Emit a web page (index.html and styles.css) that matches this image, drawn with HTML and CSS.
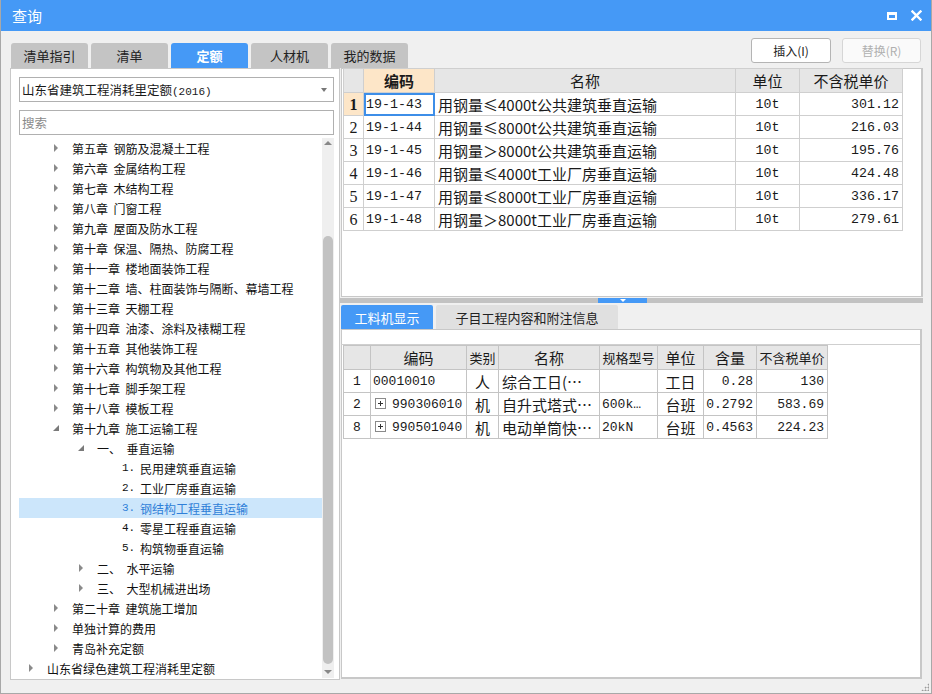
FILE: index.html
```html
<!DOCTYPE html>
<html lang="zh">
<head>
<meta charset="utf-8">
<title>查询</title>
<link rel="stylesheet" href="styles.css">
</head>
<body>
<div class="window">
  <div class="titlebar">
    <span class="title">查询</span>
    <span class="tb-icons">
      <span class="ico-max"></span>
      <svg class="ico-close" width="11" height="11" viewBox="0 0 11 11"><path d="M1.5 1.5 L9.5 9.5 M9.5 1.5 L1.5 9.5" stroke="#fff" stroke-width="2.4" stroke-linecap="square"/></svg>
    </span>
  </div>
  <div class="toolbar">
    <div class="tabs">
      <div class="tab">清单指引</div>
      <div class="tab">清单</div>
      <div class="tab active">定额</div>
      <div class="tab">人材机</div>
      <div class="tab">我的数据</div>
    </div>
    <div class="buttons">
      <div class="btn">插入(I)</div>
      <div class="btn disabled">替换(R)</div>
    </div>
  </div>
  <div class="main">
    <div class="left">
      <div class="select"><span>山东省建筑工程消耗里定额<span class="paren">(2016)</span></span><span class="caret"></span></div>
      <div class="search">搜索</div>
      <div class="treewrap">
        <div class="tree">
          <div class="row l1"><span class="arw r"></span><span class="lbl">第五章  钢筋及混凝土工程</span></div>
          <div class="row l1"><span class="arw r"></span><span class="lbl">第六章  金属结构工程</span></div>
          <div class="row l1"><span class="arw r"></span><span class="lbl">第七章  木结构工程</span></div>
          <div class="row l1"><span class="arw r"></span><span class="lbl">第八章  门窗工程</span></div>
          <div class="row l1"><span class="arw r"></span><span class="lbl">第九章  屋面及防水工程</span></div>
          <div class="row l1"><span class="arw r"></span><span class="lbl">第十章  保温、隔热、防腐工程</span></div>
          <div class="row l1"><span class="arw r"></span><span class="lbl">第十一章  楼地面装饰工程</span></div>
          <div class="row l1"><span class="arw r"></span><span class="lbl">第十二章  墙、柱面装饰与隔断、幕墙工程</span></div>
          <div class="row l1"><span class="arw r"></span><span class="lbl">第十三章  天棚工程</span></div>
          <div class="row l1"><span class="arw r"></span><span class="lbl">第十四章  油漆、涂料及裱糊工程</span></div>
          <div class="row l1"><span class="arw r"></span><span class="lbl">第十五章  其他装饰工程</span></div>
          <div class="row l1"><span class="arw r"></span><span class="lbl">第十六章  构筑物及其他工程</span></div>
          <div class="row l1"><span class="arw r"></span><span class="lbl">第十七章  脚手架工程</span></div>
          <div class="row l1"><span class="arw r"></span><span class="lbl">第十八章  模板工程</span></div>
          <div class="row l1"><span class="arw d"></span><span class="lbl">第十九章  施工运输工程</span></div>
          <div class="row l2"><span class="arw d"></span><span class="lbl">一、  垂直运输</span></div>
          <div class="row l3"><span class="arw"></span><span class="num">1.</span><span class="lbl">民用建筑垂直运输</span></div>
          <div class="row l3"><span class="arw"></span><span class="num">2.</span><span class="lbl">工业厂房垂直运输</span></div>
          <div class="row l3 sel"><span class="arw"></span><span class="num">3.</span><span class="lbl">钢结构工程垂直运输</span></div>
          <div class="row l3"><span class="arw"></span><span class="num">4.</span><span class="lbl">零星工程垂直运输</span></div>
          <div class="row l3"><span class="arw"></span><span class="num">5.</span><span class="lbl">构筑物垂直运输</span></div>
          <div class="row l2"><span class="arw r"></span><span class="lbl">二、  水平运输</span></div>
          <div class="row l2"><span class="arw r"></span><span class="lbl">三、  大型机械进出场</span></div>
          <div class="row l1"><span class="arw r"></span><span class="lbl">第二十章  建筑施工增加</span></div>
          <div class="row l1"><span class="arw r"></span><span class="lbl">单独计算的费用</span></div>
          <div class="row l1"><span class="arw r"></span><span class="lbl">青岛补充定额</span></div>
          <div class="row l0"><span class="arw r"></span><span class="lbl">山东省绿色建筑工程消耗里定额</span></div>
        </div>
        <div class="vscroll">
          <span class="sc-up"></span>
          <div class="sc-track"><div class="sc-thumb"></div></div>
          <span class="sc-down"></span>
        </div>
      </div>
    </div>
    <div class="right">
      <div class="upper">
        <table class="grid top">
          <colgroup><col style="width:20px"><col style="width:71px"><col style="width:301px"><col style="width:64px"><col style="width:103px"></colgroup>
          <thead>
            <tr><th class="hl"></th><th class="peach">编码</th><th>名称</th><th>单位</th><th>不含税单价</th></tr>
          </thead>
          <tbody>
            <tr><td class="rn peach b">1</td><td class="code cur">19-1-43</td><td class="nm">用钢量≤4000t公共建筑垂直运输</td><td class="c">10t</td><td class="r">301.12</td></tr>
            <tr><td class="rn">2</td><td class="code">19-1-44</td><td class="nm">用钢量≤8000t公共建筑垂直运输</td><td class="c">10t</td><td class="r">216.03</td></tr>
            <tr><td class="rn">3</td><td class="code">19-1-45</td><td class="nm">用钢量＞8000t公共建筑垂直运输</td><td class="c">10t</td><td class="r">195.76</td></tr>
            <tr><td class="rn">4</td><td class="code">19-1-46</td><td class="nm">用钢量≤4000t工业厂房垂直运输</td><td class="c">10t</td><td class="r">424.48</td></tr>
            <tr><td class="rn">5</td><td class="code">19-1-47</td><td class="nm">用钢量≤8000t工业厂房垂直运输</td><td class="c">10t</td><td class="r">336.17</td></tr>
            <tr><td class="rn">6</td><td class="code">19-1-48</td><td class="nm">用钢量＞8000t工业厂房垂直运输</td><td class="c">10t</td><td class="r">279.61</td></tr>
          </tbody>
        </table>
      </div>
      <div class="splitter"><span class="grip"><span class="tri"></span></span></div>
      <div class="subtabs">
        <div class="stab active">工料机显示</div>
        <div class="stab">子目工程内容和附注信息</div>
      </div>
      <div class="lower">
        <div class="lower-strip"></div>
        <table class="grid bot">
          <colgroup><col style="width:27px"><col style="width:96px"><col style="width:32px"><col style="width:101px"><col style="width:58px"><col style="width:46px"><col style="width:53px"><col style="width:71px"></colgroup>
          <thead>
            <tr><th></th><th>编码</th><th class="sm">类别</th><th>名称</th><th class="sm">规格型号</th><th>单位</th><th>含量</th><th class="sm">不含税单价</th></tr>
          </thead>
          <tbody>
            <tr><td class="c">1</td><td class="code">00010010</td><td class="c cj">人</td><td class="nm">综合工日(…</td><td></td><td class="c cj">工日</td><td class="r">0.28</td><td class="r">130</td></tr>
            <tr><td class="c">2</td><td class="code"><span class="plus"></span>990306010</td><td class="c cj">机</td><td class="nm">自升式塔式…</td><td class="nm sm">600k…</td><td class="c cj">台班</td><td class="r">0.2792</td><td class="r">583.69</td></tr>
            <tr><td class="c">8</td><td class="code"><span class="plus"></span>990501040</td><td class="c cj">机</td><td class="nm">电动单筒快…</td><td class="nm sm">20kN</td><td class="c cj">台班</td><td class="r">0.4563</td><td class="r">224.23</td></tr>
          </tbody>
        </table>
      </div>
    </div>
  </div>
  <div class="grip-corner"></div>
</div>
</body>
</html>
```
FILE: styles.css
```css
* { box-sizing: border-box; }
html, body { margin: 0; padding: 0; background: #f0f0f0; }
body {
  font-family: "Noto Sans CJK SC", "Noto Sans", sans-serif;
  color: #1a1a1a;
}
.window {
  position: relative;
  width: 932px;
  height: 694px;
  background: #f0f0f0;
  border: 1px solid #a8a8a8;
  border-top: none;
  overflow: hidden;
}
.titlebar {
  height: 31px;
  background: #4599f6;
  display: flex;
  align-items: center;
  justify-content: space-between;
  padding: 0 10px 0 12px;
  margin: 0 -1px;
}
.title { color: #fff; font-size: 15px; line-height: 1; }
.tb-icons { display: flex; align-items: center; gap: 14px; }
.ico-max {
  width: 10px; height: 8px;
  border: 2px solid #fff; border-top-width: 3px;
}
.ico-close { display: block; }
.toolbar {
  height: 37px;
  display: flex;
  justify-content: space-between;
  padding: 0 10px 0 9px;
}
.tabs { display: flex; align-items: flex-end; gap: 3px; padding-left: 1px; }
.tab {
  width: 77px; height: 25px;
  background: #c4c4c4;
  border-radius: 3px 3px 0 0;
  font-size: 13px;
  display: flex; align-items: center; justify-content: center;
  color: #222;
}
.tab.active { background: #4599f6; color: #fff; font-weight: bold; }
.buttons { display: flex; gap: 11px; padding-top: 7px; }
.btn {
  width: 80px; height: 25px;
  background: #fff;
  border: 1px solid #b4b4b4;
  border-radius: 3px;
  font-size: 12px;
  display: flex; align-items: center; justify-content: center;
  color: #222;
}
.btn.disabled { width: 79px; border-color: #d6d6d6; color: #b0b0b0; background: #fafafa; }
.main {
  display: flex;
  gap: 1px;
  padding-left: 9px;
}
.left {
  width: 330px;
  height: 612px;
  background: #fff;
  border: 1px solid #c8c8c8;
  padding: 8px 5px 0 8px;
}
.select {
  height: 25px;
  border: 1px solid #b0b0b0;
  display: flex; align-items: center; justify-content: space-between;
  padding: 0 6px 0 2px;
  font-size: 12.5px;
}
.select .paren { font-family: "Liberation Mono", monospace; font-size: 11px; }
.caret {
  width: 0; height: 0;
  border-left: 3.5px solid transparent; border-right: 3.5px solid transparent;
  border-top: 4px solid #777;
}
.search {
  margin-top: 8px;
  height: 25px;
  border: 1px solid #b0b0b0;
  font-size: 12.5px;
  color: #8a8a8a;
  display: flex; align-items: center;
  padding-left: 2px;
}
.treewrap {
  margin-top: 3px;
  display: flex;
  height: 542px;
}
.tree { flex: 1; }
.row {
  height: 20px;
  display: flex; align-items: center;
  font-size: 12px;
  white-space: pre;
  color: #111;
}
.row.l0 { padding-left: 9px; }
.row.l1 { padding-left: 34px; }
.row.l2 { padding-left: 59px; }
.row.l3 { padding-left: 84px; }
.row.sel { background: #cce6fb; color: #2f7fd8; }
.arw { width: 19px; height: 20px; position: relative; flex: none; }
.arw.r::before {
  content: ""; position: absolute; left: 1px; top: 6px;
  border-left: 4px solid #8a8a8a;
  border-top: 4px solid transparent; border-bottom: 4px solid transparent;
}
.arw.d::before {
  content: ""; position: absolute; left: 0; top: 7px;
  border-bottom: 6px solid #7a7a7a;
  border-left: 6px solid transparent;
}
.num { width: 18px; font-family: "Liberation Mono", monospace; font-size: 11px; }
.vscroll {
  width: 12px;
  background: #efefef;
  display: flex; flex-direction: column; align-items: center;
  margin-bottom: 2px;
}
.sc-up, .sc-down { height: 10px; width: 12px; position: relative; flex: none; }
.sc-up::before {
  content: ""; position: absolute; left: 2px; top: 3px;
  border-left: 4px solid transparent; border-right: 4px solid transparent;
  border-bottom: 4px solid #888;
}
.sc-down::before {
  content: ""; position: absolute; left: 2px; top: 2px;
  border-left: 4px solid transparent; border-right: 4px solid transparent;
  border-top: 4px solid #888;
}
.sc-track { flex: 1; width: 12px; padding-top: 88px; padding-bottom: 4px; display: flex; }
.sc-thumb { flex: 1; background: #c2c2c2; border-radius: 5px; margin: 0 1px; }
.right { width: 582px; display: flex; flex-direction: column; }
.upper {
  height: 229px;
  background: #fff;
  border: 1px solid #c8c8c8;
  border-right: 2px solid #c8c8c8;
  padding: 0 0 0 1px;
}
.grid {
  border-collapse: collapse;
  table-layout: fixed;
  font-family: "Liberation Mono", "Noto Sans CJK SC", monospace;
}
.grid th, .grid td {
  border: 1px solid #cfcfcf;
  padding: 0;
  white-space: nowrap;
  overflow: hidden;
}
.grid.top { font-size: 13.3px; width: 559px; margin-top: -1px; }
.grid.top th {
  height: 24px;
  background: #e6e6e6;
  font-weight: normal;
  font-family: "Noto Sans CJK SC", sans-serif;
  font-size: 15px;
  line-height: 22px;
}
.grid.top th.peach { background: #fde6c8; font-weight: bold; }
.grid.top td { height: 23px; line-height: 21px; }
.rn { text-align: center; font-family: "Liberation Serif", serif; font-size: 16px !important; background: #fff; }
.peach { background: #fde6c8; }
.b { font-weight: bold; }
.code { padding-left: 2px !important; }
.nm { padding-left: 3px !important; font-family: "Noto Sans CJK SC", sans-serif; letter-spacing: 0; }
.grid.top .nm { font-size: 15px; }
.cj { font-family: "Noto Sans CJK SC", sans-serif; font-size: 15px; }
.c { text-align: center; }
.r { text-align: right; padding-right: 3px !important; }
td.cur { outline: 2px solid #3d8ee8; outline-offset: -2px; }
.splitter {
  height: 6px;
  background: #c2c2c2;
  margin-top: 0;
  margin-left: -1px;
  display: flex; justify-content: center;
  border-top: 1px solid #f0f0f0;
}
.grip {
  width: 49px; height: 5px; background: #4599f6;
  display: flex; justify-content: center; align-items: center;
  margin-left: -18px;
}
.tri { border-left: 3px solid transparent; border-right: 3px solid transparent; border-top: 3px solid #fff; }
.subtabs { display: flex; gap: 3px; padding-top: 2px; height: 26px; }
.stab {
  height: 24px;
  padding: 0;
  font-size: 13px;
  display: flex; align-items: center; justify-content: center;
  background: #e0e0e0;
  border-radius: 2px 2px 0 0;
  width: 182px;
  color: #222;
}
.stab.active { width: 92px; background: #4599f6; color: #fff; }
.lower {
  height: 350px;
  background: #fff;
  border: 1px solid #c8c8c8;
  border-right: 2px solid #c8c8c8;
  border-bottom: 2px solid #c8c8c8;
  width: 581px;
  padding-left: 1px;
}
.lower-strip { height: 15px; border-bottom: 1px solid #cfcfcf; margin-left: -2px; }
.grid.bot { font-size: 13px; width: 484px; }
.grid.bot th {
  height: 24px;
  background: #e6e6e6;
  font-weight: normal;
  font-family: "Noto Sans CJK SC", sans-serif;
  font-size: 15px;
  line-height: 22px;
  border-color: #c4c4c4;
}
.grid.bot th.sm { font-size: 13px; }
.grid.bot td { height: 23px; line-height: 21px; border-color: #c4c4c4; }
.grid.bot .nm { font-size: 15px; }
.grid.bot .nm.sm { font-family: "Liberation Mono", monospace; font-size: 13px; padding-left: 2px !important; }
.plus {
  display: inline-block;
  width: 11px; height: 11px;
  border: 1px solid #8a8a8a;
  position: relative;
  margin: 0 6px 0 2px;
  vertical-align: -1px;
}
.plus::before { content: ""; position: absolute; left: 2px; top: 4px; width: 5px; height: 1px; background: #333; }
.plus::after { content: ""; position: absolute; left: 4px; top: 2px; width: 1px; height: 5px; background: #333; }
.grip-corner {
  position: absolute; right: 2px; bottom: 2px;
  width: 8px; height: 8px;
  background:
    radial-gradient(circle, #9a9a9a 0.9px, transparent 1.1px) 0 0 / 3px 3px;
  clip-path: polygon(100% 0, 100% 100%, 0 100%);
}
```
